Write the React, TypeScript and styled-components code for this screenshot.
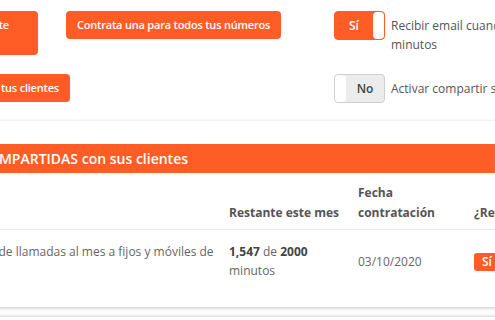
import React from 'react'
import styled, { createGlobalStyle } from 'styled-components'

const orange = '#ff5c26'

const GlobalStyle = createGlobalStyle`
  html, body {
    margin: 0;
    padding: 0;
    background: #fff;
    overflow: hidden;
  }
  body {
    font-family: 'Open Sans', 'Liberation Sans', sans-serif;
    font-size: 12px;
    color: #666;
  }
`

const Viewport = styled.div`
  width: 495px;
  height: 320px;
  overflow: hidden;
`

const Page = styled.div`
  margin-left: -160px;
  width: 760px;
  padding-top: 11px;
`

const Options = styled.div`
  display: grid;
  grid-template-columns: 494px 1fr;
  row-gap: 19px;
  align-items: start;
`

const ButtonRow = styled.div`
  display: flex;
  gap: 28px;
  align-items: flex-start;
`

const Button = styled.button<{ $width?: number; $tall?: boolean; $align?: string }>`
  background: ${orange};
  color: #fff;
  border: none;
  border-radius: 4px;
  font-family: inherit;
  font-size: 11px;
  letter-spacing: -0.2px;
  font-weight: 600;
  line-height: 16px;
  padding: 6px 11px;
  height: ${p => (p.$tall ? '44px' : '28px')};
  width: ${p => (p.$width ? `${p.$width}px` : 'auto')};
  text-align: ${p => p.$align || 'center'};
  white-space: nowrap;
  cursor: pointer;
`

const Line = styled.span<{ $hidden?: boolean }>`
  display: block;
  text-align: ${p => (p.$hidden ? 'left' : 'right')};
  margin-right: ${p => (p.$hidden ? '0' : '18px')};
`

const ToggleRow = styled.div`
  display: flex;
  gap: 6px;
  align-items: flex-start;
`

const Toggle = styled.div<{ $on: boolean }>`
  flex: none;
  display: flex;
  flex-direction: ${p => (p.$on ? 'row' : 'row-reverse')};
  width: 51px;
  height: 29px;
  box-sizing: border-box;
  border-radius: 4px;
  border: 1px solid ${p => (p.$on ? orange : '#cfcfcf')};
  background: ${p => (p.$on ? orange : '#ececec')};
  overflow: hidden;
`

const ToggleText = styled.span<{ $on: boolean }>`
  flex: 1;
  display: flex;
  align-items: center;
  justify-content: center;
  font-size: 12px;
  font-weight: 600;
  color: ${p => (p.$on ? '#fff' : '#444')};
`

const Knob = styled.span<{ $on: boolean }>`
  width: 11px;
  background: #fff;
  border-radius: ${p => (p.$on ? '4px 3px 3px 4px' : '3px 4px 4px 3px')};
`

const ToggleLabel = styled.span<{ $width: number }>`
  padding-top: 5px;
  font-size: 12px;
  line-height: 19px;
  color: #555;
  width: ${p => p.$width}px;
`

const Card = styled.section`
  margin-top: 18px;
  background: #fff;
  padding: 23px 0 15px;
  box-shadow: 0 1px 4px rgba(0, 0, 0, 0.22);
`

const CardTitle = styled.h3`
  margin: 0;
  height: 29px;
  display: flex;
  align-items: center;
  background: ${orange};
  color: #fff;
  font-size: 14px;
  font-weight: 600;
  padding-left: 12px;
`

const Table = styled.table`
  border-collapse: collapse;
  table-layout: fixed;
  width: 760px;
`

const Th = styled.th<{ $width: number }>`
  width: ${p => p.$width}px;
  text-align: left;
  vertical-align: bottom;
  font-size: 12px;
  font-weight: 700;
  line-height: 20px;
  color: #555;
  padding: 10px 12px 6px;
  border-bottom: 1px solid #e4e7ea;
  white-space: nowrap;
`

const Td = styled.td<{ $indent?: number }>`
  vertical-align: middle;
  font-size: 12px;
  line-height: 19px;
  color: #666;
  padding: 12px 12px 12px ${p => p.$indent ?? 12}px;
  white-space: nowrap;
`

const Strong = styled.b`
  color: #444;
  font-weight: 700;
`

const Badge = styled.span`
  display: inline-block;
  background: ${orange};
  color: #fff;
  font-weight: 600;
  font-size: 12px;
  line-height: 18px;
  padding: 0 8px;
  border-radius: 3px;
`

const NextCard = styled.div`
  margin-top: 10px;
  height: 20px;
  background: #fff;
  box-shadow: 0 -1px 3px rgba(0, 0, 0, 0.18);
`

export default function App() {
  return (
    <Viewport>
      <GlobalStyle />
      <Page>
        <Options>
          <ButtonRow>
            <Button $tall $width={198}>
              <Line>Contratar bolsa independiente</Line>
              <Line $hidden>por cliente</Line>
            </Button>
            <Button>Contrata una para todos tus números</Button>
          </ButtonRow>
          <ToggleRow>
            <Toggle $on>
              <ToggleText $on>Sí</ToggleText>
              <Knob $on />
            </Toggle>
            <ToggleLabel $width={215}>Recibir email cuando queden pocos minutos</ToggleLabel>
          </ToggleRow>
          <ButtonRow>
            <Button $width={230} $align="right">Compartir bolsa con tus clientes</Button>
          </ButtonRow>
          <ToggleRow>
            <Toggle $on={false}>
              <ToggleText $on={false}>No</ToggleText>
              <Knob $on={false} />
            </Toggle>
            <ToggleLabel $width={260}>Activar compartir sus minutos</ToggleLabel>
          </ToggleRow>
        </Options>

        <Card>
          <CardTitle>Bolsas de minutos COMPARTIDAS con sus clientes</CardTitle>
          <Table>
            <thead>
              <tr>
                <Th $width={353}>Bolsa</Th>
                <Th $width={105}>Restante este mes</Th>
                <Th $width={92}>
                  Fecha
                  <br />
                  contratación
                </Th>
                <Th $width={114}>¿Renovar?</Th>
              </tr>
            </thead>
            <tbody>
              <tr>
                <Td $indent={28}>
                  Bolsa de 2000 minutos de llamadas al mes a fijos y móviles de
                  <br />
                  España
                </Td>
                <Td>
                  <Strong>1,547</Strong> de <Strong>2000</Strong>
                  <br />
                  minutos
                </Td>
                <Td>03/10/2020</Td>
                <Td>
                  <Badge>Sí</Badge>
                </Td>
              </tr>
            </tbody>
          </Table>
        </Card>
        <NextCard />
      </Page>
    </Viewport>
  )
}
